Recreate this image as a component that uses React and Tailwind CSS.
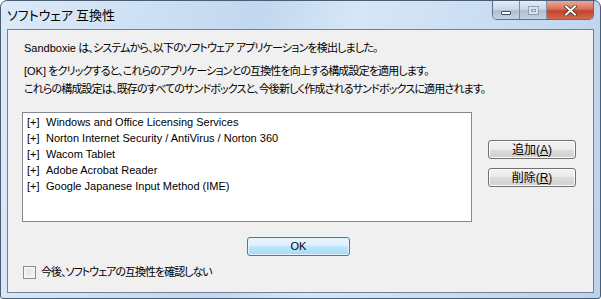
import React from "react";

const items = [
  "Windows and Office Licensing Services",
  "Norton Internet Security / AntiVirus / Norton 360",
  "Wacom Tablet",
  "Adobe Acrobat Reader",
  "Google Japanese Input Method (IME)",
];

const ui = {
  fontFamily: '"Liberation Sans", "Noto Sans CJK JP", sans-serif',
  fontFeatureSettings: '"palt"',
};

function WinButton({ children, className = "" }) {
  return (
    <button
      className={
        "flex items-center justify-center rounded-[3px] border border-[#707070] bg-[linear-gradient(#f2f2f2_0%,#ebebeb_50%,#dddddd_50%,#cfcfcf_100%)] text-[12px] leading-none text-black shadow-[inset_0_0_0_1px_#fcfcfc] " +
        className
      }
    >
      {children}
    </button>
  );
}

export default function App() {
  return (
    <div
      className="flex h-[299px] w-[601px] flex-col overflow-hidden rounded-t-[7px] rounded-b-[3px] border border-[#4a5d73] bg-[linear-gradient(100deg,#dceaf8_0%,#c2d8f0_40%,#d6e6f6_55%,#bcd3ec_100%)]"
      style={ui}
    >
      {/* title bar */}
      <div className="flex h-[28px] shrink-0 items-start justify-between">
        <span
          className="pl-[6px] pt-[6px] text-[13px] leading-[16px] text-black"
          style={{ fontFamily: '"Noto Sans CJK JP", sans-serif' }}
        >
          ソフトウェア 互換性
        </span>
        <div className="mr-[6px] flex h-[19px] overflow-hidden rounded-b-[5px] border border-t-0 border-[#5c6f86]">
          <div className="flex w-[27px] items-center justify-center border-r border-[#7d8ea3] bg-[linear-gradient(#e3ecf6_0%,#cbd9e8_45%,#aebfd3_55%,#c4d4e6_100%)]">
            <div className="mt-[5px] h-[4px] w-[10px] rounded-[1px] border border-[#3b4a5c] bg-white" />
          </div>
          <div className="flex w-[27px] items-center justify-center border-r border-[#7d8ea3] bg-[linear-gradient(#e3ecf6_0%,#cbd9e8_45%,#aebfd3_55%,#c4d4e6_100%)]">
            <div className="flex h-[9px] w-[11px] items-center justify-center border border-[#8fa0b4] bg-[#d8e3ef]">
              <div className="h-[3px] w-[5px] border border-[#8fa0b4]" />
            </div>
          </div>
          <div className="flex w-[46px] items-center justify-center bg-[linear-gradient(#e9a99b_0%,#d7705a_45%,#c2412a_55%,#d56a4d_100%)]">
            <svg width="13" height="11" viewBox="0 0 13 11">
              <path
                d="M2 1.5 L11 9.5 M11 1.5 L2 9.5"
                stroke="#3a2a25"
                strokeWidth="3.4"
                strokeLinecap="square"
              />
              <path
                d="M2 1.5 L11 9.5 M11 1.5 L2 9.5"
                stroke="#ffffff"
                strokeWidth="2"
                strokeLinecap="square"
              />
            </svg>
          </div>
        </div>
      </div>

      {/* client area */}
      <div className="mx-[6px] mb-[5px] flex flex-1 flex-col border border-[#6e8299] bg-[#f0f0f0]">
        <div className="flex flex-col gap-[5px] pl-[16px] pt-[12px] text-[11px] leading-[13px] tracking-[-0.85px] text-black">
          <p>
            <span className="tracking-normal">Sandboxie</span> は、システムから、以下のソフトウェア アプリケーションを検出しました。
          </p>
          <p className="mt-[5px]">
            <span className="tracking-normal">[OK]</span> をクリックすると、これらのアプリケーションとの互換性を向上する構成設定を適用します。
          </p>
          <p>これらの構成設定は、既存のすべてのサンドボックスと、今後新しく作成されるサンドボックスに適用されます。</p>
        </div>

        <div className="mt-[16px] flex items-start">
          <div className="ml-[14px] h-[110px] w-[450px] border border-[#828790] bg-white pl-[4px] pt-[1px]">
            {items.map((it) => (
              <div key={it} className="flex h-[16px] items-center text-[11px] text-black">
                <span className="w-[19px]">[+]</span>
                <span>{it}</span>
              </div>
            ))}
          </div>
          <div className="ml-[16px] mt-[28px] flex flex-col gap-[9px]">
            <WinButton className="h-[19px] w-[88px]">
              追加(<span className="underline">A</span>)
            </WinButton>
            <WinButton className="h-[19px] w-[88px]">
              削除(<span className="underline">R</span>)
            </WinButton>
          </div>
        </div>

        <div className="mt-[15px] flex justify-center pr-[4px]">
          <button className="flex h-[19px] w-[103px] items-center justify-center rounded-[3px] border border-[#3c7fb1] bg-[linear-gradient(#eaf6fd_0%,#d9f0fc_50%,#bee6fd_50%,#a7d9f5_100%)] text-[11px] leading-none text-black shadow-[inset_0_0_0_1px_#e5f4fc]">
            OK
          </button>
        </div>

        <div className="mt-[10px] flex items-center pl-[15px]">
          <div className="h-[13px] w-[13px] border border-[#8e8f8f] bg-[linear-gradient(135deg,#dcdcdc,#f6f6f6)] shadow-[inset_0_0_0_2px_#f4f4f4]" />
          <span className="ml-[5px] text-[11px] leading-[13px] tracking-[-1px] text-black">
            今後、ソフトウェアの互換性を確認しない
          </span>
        </div>
      </div>
    </div>
  );
}
